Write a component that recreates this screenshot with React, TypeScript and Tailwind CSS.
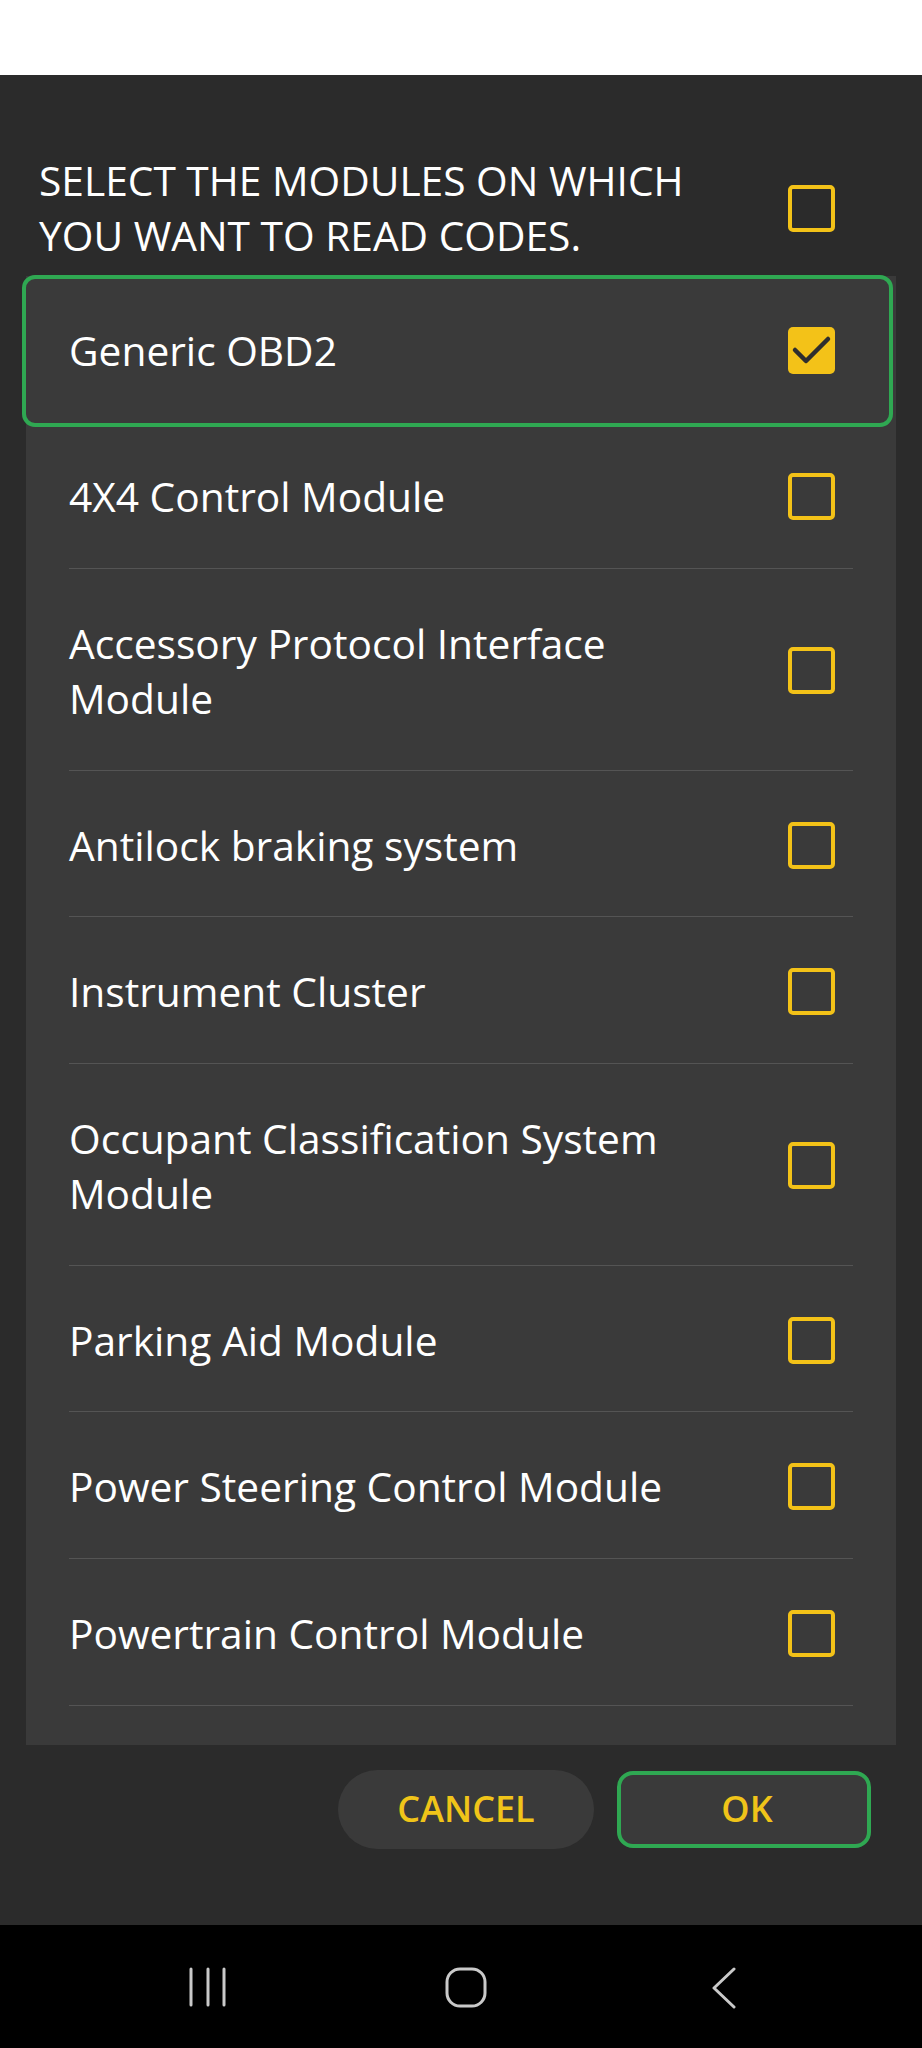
import React from "react";

const items: { label: string; checked?: boolean }[] = [
  { label: "Generic OBD2", checked: true },
  { label: "4X4 Control Module" },
  { label: "Accessory Protocol Interface Module" },
  { label: "Antilock braking system" },
  { label: "Instrument Cluster" },
  { label: "Occupant Classification System Module" },
  { label: "Parking Aid Module" },
  { label: "Power Steering Control Module" },
  { label: "Powertrain Control Module" },
];

function Checkbox({ checked }: { checked?: boolean }) {
  if (checked) {
    return (
      <div className="w-[47px] h-[47px] shrink-0 rounded-[5px] bg-[#f3c218] flex items-center justify-center">
        <svg width="47" height="47" viewBox="0 0 47 47">
          <polyline
            points="7,23 18,34 40,12"
            fill="none"
            stroke="#2e2e2e"
            strokeWidth="4.5"
            strokeLinecap="round"
            strokeLinejoin="round"
          />
        </svg>
      </div>
    );
  }
  return <div className="w-[47px] h-[47px] shrink-0 rounded-[5px] border-[4.5px] border-[#f3c218]" />;
}

function Row({ label, checked, first }: { label: string; checked?: boolean; first?: boolean }) {
  return (
    <div
      className={`mx-[43px] flex items-center gap-[60px] pt-[47px] pb-[43.67px] pr-[18px] border-b ${
        first ? "border-transparent" : "border-[#545454]"
      }`}
    >
      <span className="flex-1 text-[40.7px] leading-[55px] text-white">{label}</span>
      <Checkbox checked={checked} />
    </div>
  );
}

export default function App() {
  return (
    <div
      className="w-[922px] h-[2048px] flex flex-col overflow-hidden"
      style={{ fontFamily: '"Open Sans", "Noto Sans", sans-serif' }}
    >
      <div className="h-[75px] bg-white shrink-0" />
      <div className="flex-1 bg-[#2b2b2b] flex flex-col">
        <div className="flex items-center gap-[50px] pl-[39px] pr-[87px] pt-[78px]">
          <p className="flex-1 text-[40.7px] leading-[55px] text-white">
            SELECT THE MODULES ON WHICH YOU WANT TO READ CODES.
          </p>
          <Checkbox />
        </div>
        <div className="mx-[26px] mt-[12.67px] bg-[#3a3a3a] pb-[39px]">
          {items.map((it, i) =>
            i === 0 ? (
              <div key={i} className="relative">
                <Row label={it.label} checked={it.checked} first />
                <div className="absolute z-10 top-[-1px] bottom-[-5px] left-[-4px] right-[3px] rounded-[13px] border-[4px] border-[#2fa852] pointer-events-none" />
              </div>
            ) : (
              <Row key={i} label={it.label} checked={it.checked} />
            )
          )}
        </div>
        <div className="flex justify-end gap-[23px] pr-[51px] mt-[25px]">
          <button className="w-[256px] h-[79px] rounded-full bg-[#3a3a3a] text-[#f0c419] text-[36px] font-semibold">
            CANCEL
          </button>
          <button className="w-[254px] h-[77px] mt-[1px] pl-[6px] rounded-[16px] border-[4px] border-[#2fa852] bg-[#3a3a3a] text-[#f0c419] text-[36px] font-semibold">
            OK
          </button>
        </div>
      </div>
      <div className="h-[123px] bg-black shrink-0 flex items-start pl-[168px] gap-[178px] pt-[42px]">
        <div className="w-[80px] flex justify-center">
          <svg width="40" height="40" viewBox="0 0 40 40">
            <g stroke="#c9c9c9" strokeWidth="3" strokeLinecap="round">
              <line x1="3" y1="2" x2="3" y2="38" />
              <line x1="20" y1="2" x2="20" y2="38" />
              <line x1="36" y1="2" x2="36" y2="38" />
            </g>
          </svg>
        </div>
        <div className="w-[80px] flex justify-center">
          <svg width="42" height="41" viewBox="0 0 42 41">
            <rect x="2" y="2" width="38" height="37" rx="13" fill="none" stroke="#c9c9c9" strokeWidth="3" />
          </svg>
        </div>
        <div className="w-[80px] flex justify-center">
          <svg width="26" height="42" viewBox="0 0 26 42">
            <polyline points="23,2 3,21 23,40" fill="none" stroke="#c9c9c9" strokeWidth="3" strokeLinecap="round" strokeLinejoin="round" />
          </svg>
        </div>
      </div>
    </div>
  );
}
